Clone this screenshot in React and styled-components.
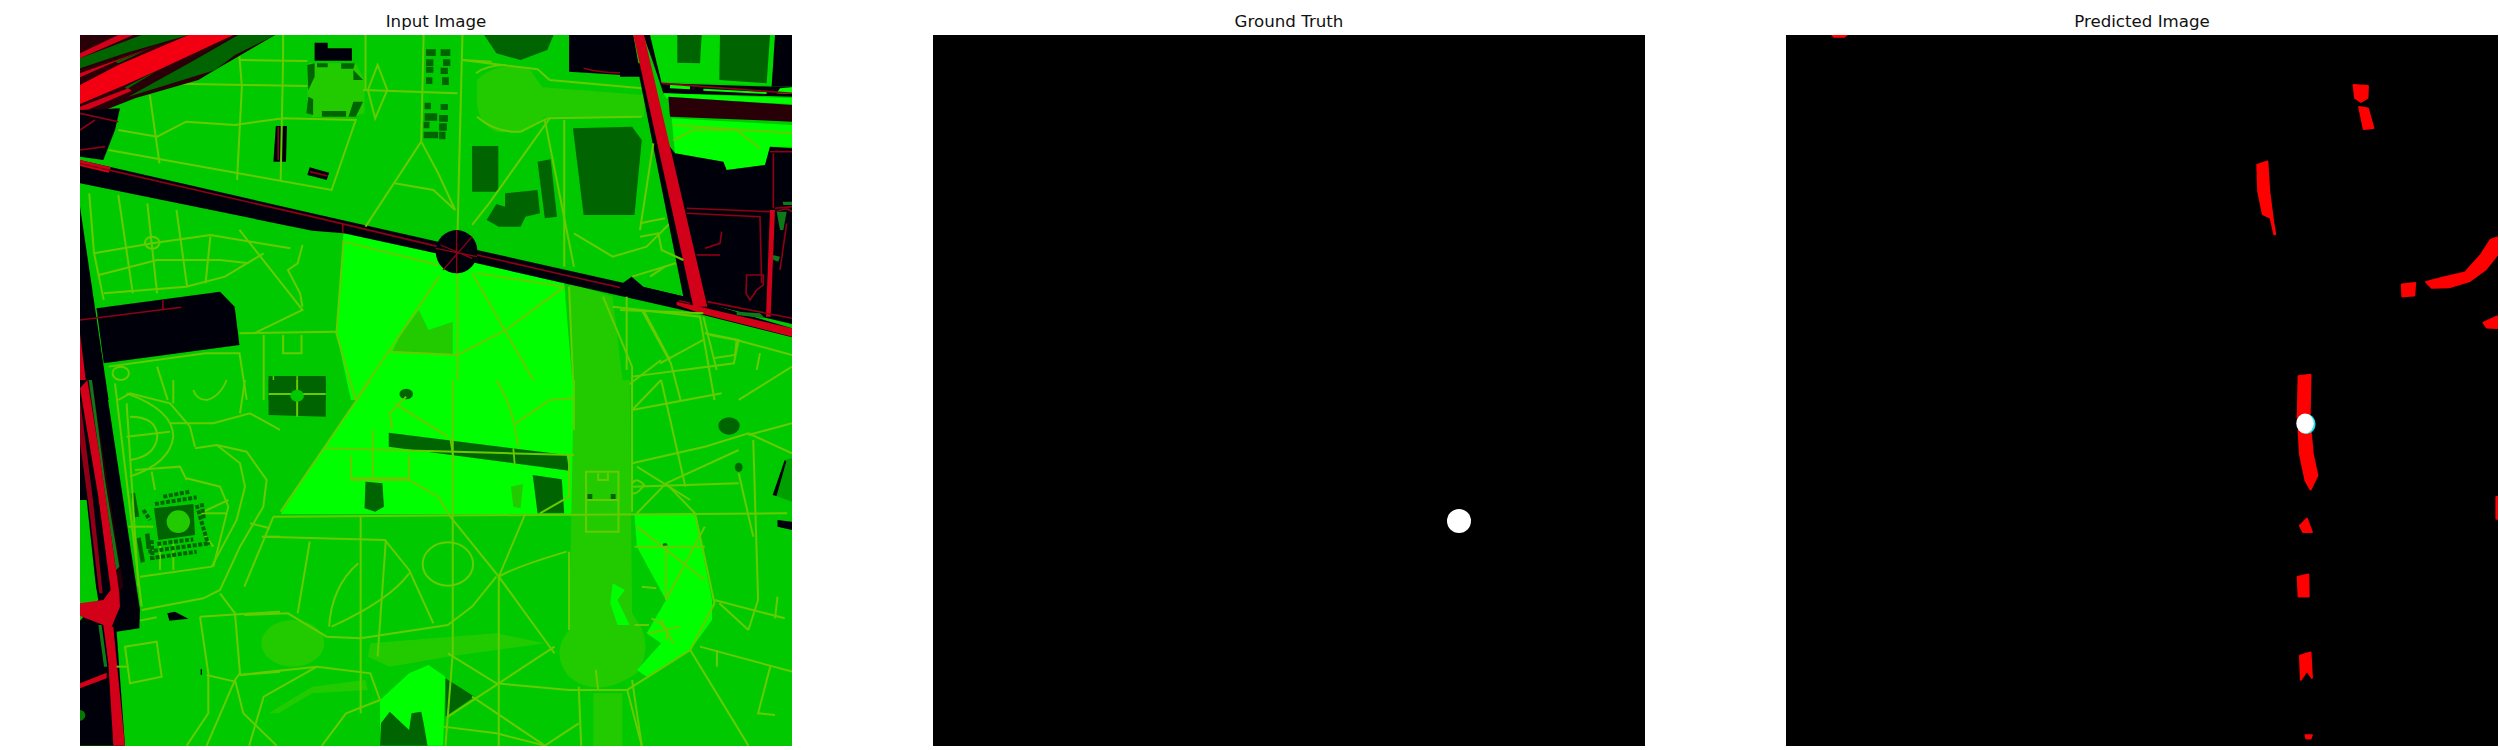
import React from 'react';
import styled, { createGlobalStyle } from 'styled-components';

const GlobalStyle = createGlobalStyle`
  html, body { margin: 0; background: #fff; }
`;

const Page = styled.div`
  display: flex;
  gap: 141px;
  width: 2500px;
  height: 750px;
  padding-left: 80px;
  box-sizing: border-box;
  overflow: hidden;
  background: #fff;
`;

const Panel = styled.section`
  display: flex;
  flex-direction: column;
  flex: none;
  width: 712px;
`;

const Title = styled.div`
  height: 35px;
  box-sizing: border-box;
  padding-top: 12px;
  font: 16.67px/20px "DejaVu Sans", sans-serif;
  color: #111;
  text-align: center;
`;

const Frame = styled.div`
  width: 712px;
  height: 711px;
  overflow: hidden;
  background: #000;
`;

const Picture = styled.svg`
  display: block;
  width: 712px;
  height: 711px;
  filter: blur(${(p) => p.$blur || 0}px);
  path { vector-effect: non-scaling-stroke; }
`;

const G = '#00c900';
const BRIGHT = '#00ff00';
const DARK = '#006400';
const MID = '#22cb00';
const KK = '#00000a';
const RED = '#d20018';
const HOT = '#f20012';
const DRED = '#8f0016';
const WINE = '#2a0008';
const LINE = '#66cc00';

// crop coordinates -> picture coordinates
const TOP = 'translate(-19.87 -35) scale(.4847 .3333)';
const BOTTOM = 'translate(-19.87 345) scale(.4847 .3333)';
const LEFT_CROP = 'translate(0 345) scale(.3333)';
const RIGHT_CROP = 'translate(540 -5) scale(.3333)';
const CORNER_CROP = 'translate(-5 -5) scale(.3333)';

const topFills = [
  [BRIGHT, 'M585 690L775 760L860 790L1040 850L1060 1200H600L570 1000Z'],
  [MID, 'M1050 850L1140 890L1165 1200H1060Z'],
  [MID, 'M860 240Q900 180 970 210L995 262L1205 285V350H1000Q960 405 900 395Q860 370 860 300Z'],
  [KK, 'M41 480L520 640L780 725L860 750L1290 890L1510 985V1012L1300 935L1040 850L860 790L775 760L585 700L520 692L41 550Z'],
  [RED, 'M41 480L105 502L100 518L41 498Z'],
  [KK, 'M1050 105H1180L1192 228L1050 215Z'],
  [DARK, 'M875 105H1018L1005 150L950 180L900 160Z'],
  [KK, 'M525 128H552V145H602V182H525Z'],
  [MID, 'M512 190H610L628 240V340L600 352H520L510 300Z'],
  [DARK, 'M510 195L525 190V230L512 270Z'],
  [DARK, 'M530 190H552V202H530ZM580 190H608L605 206H580ZM605 210L625 240H605ZM540 333H590V350H540ZM605 305L625 305L610 350H595ZM512 290L522 298L522 345L508 340Z'],
  [KK, 'M445 378H468L466 485H440Z'],
  [KK, 'M515 502L555 518L550 540L510 525Z'],
  [DARK, 'M850 438H904V575H850Z'],
  [DARK, 'M985 485L1012 478L1025 650L1000 655Z'],
  [DARK, 'M918 580L985 570L990 640L960 650L950 680L905 680L880 660L900 612L918 620Z'],
  [DARK, 'M1058 385L1180 380L1200 420L1185 645H1080Z'],
  [KK, 'M75 925L330 875L360 920L370 1035L90 1090Z'],
  [KK, 'M41 620L100 1200H41Z'],
  [RED, 'M41 1000L58 1200H41Z'],
  [DARK, 'M430 1128H548V1200H430Z'],
  [MID, 'M700 1010L740 930L760 990L810 965L810 1065L685 1055Z'],
  [DARK, 'M705 1185a9 14 0 1 0 18 0a9 14 0 1 0 -18 0'],
];

const blocks = [
  'M755 148H775V168H755ZM785 148H805V168H785ZM755 178H770V198H755ZM790 178H805V198H790ZM755 200H770V218H755ZM785 203H800V222H785ZM755 232H768V252H755ZM788 232H802V255H788Z',
  'M752 308H765V328H752ZM785 312H800V330H785ZM752 340H778V362H752ZM782 345H800V365H782ZM750 365H762V385H750ZM782 370H798V392H782ZM750 395H780V415H750ZM782 395H795V418H782Z',
];

const topLines = [
  'M460 105V180L455 540', 'M370 180L510 183', 'M830 180L890 185', 'M185 250L510 258', 'M625 270L820 280',
  'M630 105V270', 'M750 105L745 425', 'M830 105L820 690', 'M370 170L375 260L365 540', 'M185 285L205 490',
  'M100 450L560 570L610 360L460 355L360 375L260 365L200 410L120 390', 'M655 195L675 270L650 355L635 270Z',
  'M745 425L630 680', 'M745 425L780 520L815 630', 'M690 550L770 570L815 630',
  'M1010 355L885 610L850 675', 'M1005 355L1200 350', 'M1040 360V800', 'M1000 360L1060 800',
  'M830 180L985 208L1010 240L1200 265', 'M860 350Q900 400 950 395L1005 355', 'M858 220Q880 195 920 195',
  'M1060 700L1140 770L1210 740L1265 660', 'M1180 830L1270 790', 'M820 820V1200', 'M782 830L610 1200',
  'M850 820L1000 1200', 'M1040 860L920 990L820 1065L680 1055', 'M585 725L780 795', 'M585 720L570 1000L610 1200',
  'M1050 860L1060 1200', 'M860 820L1040 860', 'M60 580L70 760L90 900', 'M120 585L150 880', 'M180 610L200 880',
  'M240 630L262 860', 'M310 710L300 850', 'M370 690L500 930L400 1000', 'M70 760L190 730L310 705L475 745',
  'M80 825L200 780L330 780L390 790', 'M90 880L260 860L340 830L420 760', 'M500 735L490 790L470 810L495 880L500 920',
  'M370 1000L570 995', 'M420 1005V1200', 'M460 1005V1060H498V1005', 'M100 1100L300 1060L370 1060L385 1200',
  'M200 1100L222 1200', 'M1120 890L1180 1100V1200', 'M1140 920L1320 950L1350 1200', 'M1200 930L1260 1090L1280 1200',
  'M1330 1000L1400 1020L1390 1090L1180 1130', 'M1240 1080L1150 1180', 'M1510 1100L1400 1200',
  'M190 728m-15 0a15 18 0 1 0 30 0a15 18 0 1 0 -30 0', 'M125 1120m-17 0a17 20 0 1 0 34 0a17 20 0 1 0 -34 0',
];

const topReds = [
  'M41 490L520 650L780 740', 'M860 765L1040 825L1300 910', 'M41 960L250 922', 'M212 900V930',
  'M1080 205Q1130 225 1190 215', 'M450 380V480', 'M515 515L552 528', 'M583 672V700',
];

const bottomFills = [
  [BRIGHT, 'M640 0H1060V402H455L545 200Z'],
  [MID, 'M1060 0H1175L1180 700Q1230 790 1190 880Q1110 960 1050 890Q1010 820 1050 750Z'],
  [MID, 'M1100 940H1160V1097H1100Z'],
  [BRIGHT, 'M1185 405L1310 400L1345 660V720L1300 810L1210 890L1190 870L1240 790L1210 760L1250 660L1190 500Z'],
  [MID, 'M415 790a65 70 0 1 0 130 0a65 70 0 1 0 -130 0'],
  [MID, 'M640 790L900 760L1000 790L800 830L680 860L635 830Z'],
  [MID, 'M430 1000L520 920L630 900L635 930L520 940L450 1000Z'],
  [DARK, 'M678 158L1045 225L1050 272L678 200Z'],
  [DARK, 'M975 285L1035 298L1040 400H985Z'],
  [DARK, 'M630 305L665 310L668 380L650 395L628 385Z'],
  [MID, 'M930 320L955 312L950 385L935 380Z'],
  [DARK, 'M700 42a14 16 0 1 0 28 0a14 16 0 1 0 -28 0'],
  [DARK, 'M1358 138a22 26 0 1 0 44 0a22 26 0 1 0 -44 0'],
  [DARK, 'M1392 262a8 14 0 1 0 16 0a8 14 0 1 0 -16 0'],
  [DARK, 'M1243 497a5 8 0 1 0 10 0a5 8 0 1 0 -10 0'],
  ['#00a000', 'M1495 240L1510 235V365L1472 345Z'],
  [KK, 'M1470 345L1495 240L1498 245L1478 348Z'],
  [KK, 'M1480 420L1510 425V450L1480 440Z'],
  [DARK, 'M430 0H548V110L430 105Z'],
  [DARK, 'M1088 342H1098V362H1088ZM1136 342H1146V362H1136Z'],
  [BRIGHT, 'M660 960L720 880L760 855L795 890L790 1097H660Z'],
  [DARK, 'M795 895L855 950L795 1010Z'],
  [DARK, 'M660 1097L662 1030L680 995L720 1050L725 1000L745 995L750 1030L758 1097Z'],
  [BRIGHT, 'M1140 610L1165 630L1150 660L1175 735L1150 735L1135 670Z'],
];

const bottomLines = [
  'M640 0L455 395', 'M545 205L1060 225', 'M440 410L1500 400', 'M645 150V300', 'M600 225V295H720V225',
  'M600 300H720L780 350L805 410L905 590L1000 780L1020 820', 'M810 0V820L795 1097', 'M960 400L905 590V1097',
  'M990 400L1050 350V225', 'M1060 0V150', 'M940 130L1010 60L1060 55', 'M690 70L800 170', 'M714 50L680 100L685 150',
  'M900 0Q935 80 945 200', 'M420 470L670 480L720 570L770 730', 'M620 405L620 1000', 'M515 485L490 700',
  'M672 480L655 830', 'M440 410L380 620', 'M615 550Q560 620 555 740', 'M720 580Q680 660 560 740',
  'M800 552m-52 0a52 65 0 1 0 104 0a52 65 0 1 0 -104 0', 'M905 590Q940 560 1045 515',
  'M900 590L850 680L800 735L620 775L550 770L470 700L380 705', 'M1050 515V750',
  'M800 820L900 910L1050 930L1170 930L1300 810L1350 670L1310 400',
  'M1020 800L905 910L800 1010', 'M370 885L530 860L640 880L660 960',
  'M530 860L420 950L390 1097', 'M1180 0V395', 'M1240 0L1180 90', 'M1365 40L1180 90', 'M1180 250L1330 200L1420 160L1510 220',
  'M1250 310L1190 400', 'M1250 310L1310 400', 'M1190 260L1300 360', 'M1250 310L1400 210', 'M1180 320L1400 310', 'M1240 0L1290 320',
  'M1190 440L1330 600', 'M1330 440L1250 660', 'M1250 497V660', 'M1185 500H1330', 'M1430 180L1440 660L1420 750', 'M1350 660L1495 715',
  'M1320 800L1510 875', 'M1300 810L1420 1097', 'M1465 860L1440 1000L1475 1005', 'M1400 280L1430 470', 'M1510 130L1420 165',
  'M1085 275H1152V455H1085Z', 'M1085 360H1152', 'M1110 280V300H1130V280', 'M1200 1097L1170 930', 'M1070 920L1075 1097',
  'M1105 870L1110 930', 'M1355 810V860', 'M790 1040L900 1060L1000 1097', 'M850 950L1000 1097', 'M1070 1030L1000 1097',
  'M660 960L590 1000L540 1097', 'M1180 310Q1190 290 1205 315Q1190 345 1180 340',
  'M1475 715L1480 650', 'M1420 750L1360 670', 'M1220 715Q1260 740 1250 780M1215 760L1280 740M1240 720L1265 790', 'M1185 735H1215', 'M1200 620L1230 625',
  'M1180 900L1200 1097',
];

const leftFills = [
  [KK, 'M0 0H75L180 690L178 745L110 755L135 1097H0V722L55 660L0 360Z'],
  [G, 'M0 360H20L52 660L0 665Z'],
  [WINE, 'M22 0H36L130 620L110 640Z'],
  ['#0d7a1a', 'M26 0H36L75 300L118 560L108 570Z'],
  [DRED, 'M0 60L12 150L40 370L68 640L58 640L25 370L0 190Z'],
  [RED, 'M0 25L22 0L60 230L118 640L120 680L95 740L100 740L135 1097H100L85 850L70 735L0 708V670L70 660L92 630L55 350Z'],
  [RED, 'M0 910L80 878L80 895L0 925Z'],
  ['#0d7a1a', 'M55 735H65L82 860L72 860Z'],
  ['#007a00', 'M0 990a16 16 0 0 1 0 32Z'],
  [KK, 'M262 700L285 695L325 716L268 722Z'],
  [KK, 'M362 868h4v16h-4Z'],
  [DARK, 'M222 385L340 372L345 465L235 480Z'],
  [MID, 'M260 425a35 34 0 1 0 70 0a35 34 0 1 0 -70 0'],
  [DARK, 'M152 340L165 338L178 410L165 412ZM170 475L182 472L195 545L182 548Z'],
  [DARK, 'M195 462L208 460L214 505L200 508Z'],
];

const leftLines = [
  'M105 10L185 680', 'M140 70L175 620', 'M115 60L150 40L270 70L330 140L345 200', 'M150 110Q230 110 232 170Q225 230 150 240',
  'M140 170L270 155', 'M140 40Q280 90 280 170Q270 250 150 290', 'M270 130H400L510 100L600 150',
  'M345 205L410 195L480 250L495 320L470 420L395 560L180 590', 'M410 195L500 215L560 300L550 380L480 500L420 630L370 655L185 690',
  'M165 270L300 260L320 300', 'M215 275L225 330', 'M320 295L420 320L445 380L400 560', 'M420 640L465 700L480 880L465 900L380 1097',
  'M180 722L230 712', 'M360 710L600 695', 'M360 710L385 880L385 1000L320 1097', 'M135 800L230 785L245 890L150 910Z',
  'M480 885L600 875', 'M380 885L465 905', 'M465 900L490 1000L590 1097', 'M145 440L220 440', 'M240 490V570', 'M280 490V570',
  'M360 400L445 360', 'M350 400H440', 'M370 460L400 500', 'M340 30Q350 60 380 60Q420 50 440 0', 'M280 0V70', 'M495 0L480 100',
  'M110 860H140', 'M510 430L570 445', 'M545 470H600',
];

const leftBlocks = [
  'M225 372L350 352', 'M250 350L330 335', 'M350 375L385 495', 'M365 370L372 420', 'M205 515L385 490', 'M210 535L350 515',
  'M190 390L210 420', 'M232 492L340 478', 'M215 480L218 540',
];

const rightFills = [
  [KK, 'M0 15H40L62 140H0Z'],
  ['#00d800', 'M90 15H465L455 165L120 155Z'],
  [DARK, 'M172 15H245L240 100L172 98Z'],
  [DARK, 'M300 15H450L440 160L298 150Z'],
  [KK, 'M465 15H516V170L455 170Z'],
  [KK, 'M70 15H90L125 160L516 172V200L130 190L100 100Z'],
  [BRIGHT, 'M150 165H210V178L150 175ZM250 176L440 186V192L250 182ZM480 175L516 172V192L470 190Z'],
  [BRIGHT, 'M130 190L516 205V222L140 205Z'],
  [WINE, 'M145 200L516 225V275L150 260Z'],
  [BRIGHT, 'M155 265L516 285V350L450 350L435 405L320 420L310 395L165 370Z'],
  [KK, 'M165 370L310 395L320 420L435 405L450 350L516 355V882L260 822L215 820L150 560L95 280Z'],
  [KK, 'M50 100L75 100L215 810L190 800Z'],
  [RED, 'M40 15H72L262 830L220 830Z'],
  [RED, 'M170 815L240 830L516 895V920L240 850L170 825Z'],
  [KK, 'M0 765L35 740L70 770L195 800L170 815L0 785Z'],
  ['#0d7a1a', 'M350 845L420 850L435 865L350 855Z'],
  ['#0d7a1a', 'M488 515H516V525H490Z'],
  ['#0d7a1a', 'M470 545L500 545L490 600L480 600Z'],
  ['#0d7a1a', 'M458 675L480 680L475 695L460 690Z'],
  [RED, 'M450 540L465 540L452 860L438 860Z'],
];

const rightLines = [
  'M160 285L516 310', 'M160 330L220 300L350 300L420 355', 'M100 340L60 600', 'M60 580L135 565', 'M60 620L115 610L125 660L190 690',
  'M90 740L135 710', 'M0 840L250 850', 'M70 840L150 990', 'M250 860L290 1020', 'M270 915L350 930L345 975L280 985', 'M120 1000L250 930',
  'M350 930L516 975', 'M420 970L410 1020', 'M20 800V1020',
];

const rightReds = [
  'M200 535L450 545', 'M200 550L420 560L425 760', 'M460 370V535', 'M465 535L516 530', 'M450 365H516',
  'M380 735H430V765L410 780L390 810L378 790Z', 'M230 675H300', 'M255 655L300 640L305 605', 'M470 545Q500 530 516 545', 'M500 580L480 720',
  'M125 160L516 190', 'M262 815L516 865',
];

const cornerFills = [
  [WINE, 'M15 15H600L420 120L370 150L180 205L15 270Z'],
  [DARK, 'M15 85L200 15H340L150 70L15 115Z'],
  [RED, 'M15 70L130 15H175L15 85Z'],
  [HOT, 'M15 165L130 105L340 15H475L250 120L150 165L15 222Z'],
  [RED, 'M15 130L250 45L120 95L15 142Z'],
  [DARK, 'M160 200L350 95L490 15H600L480 75L420 120Z'],
  [DARK, 'M120 95L210 62L130 100Z'],
  [DARK, 'M150 172L250 120L155 178Z'],
  [RED, 'M15 230L160 175L170 182L15 250Z'],
  [KK, 'M15 240L135 235L120 300L85 390L15 380Z'],
];

const cornerReds = ['M15 250L130 275', 'M15 360L90 350', 'M15 300L60 270'];

const predicted = [
  'M115 72H148L142 77H120Z',
  'M1252 178L1283 180L1282 205L1268 213L1255 205Z',
  'M1264 224L1283 227L1295 268L1274 270Z',
  'M1042 345L1064 338L1068 400L1076 460L1081 490H1079L1071 456L1054 448L1044 400Z',
  'M1410 590L1450 580L1495 570L1530 532L1550 502L1565 497V533L1540 563L1505 588L1460 601L1422 602Z',
  'M1357 595L1386 592L1384 618L1358 620Z',
  'M1535 675L1565 662V686L1542 685Z',
  'M1132 787L1158 784L1156 875H1130Z',
  'M1132 900L1158 900L1163 950L1173 995L1158 1024L1147 1005L1135 950Z',
  'M1135 1100L1150 1085L1161 1113L1142 1113Z',
  'M1130 1207L1153 1202L1154 1248H1132Z',
  'M1135 1372L1158 1365L1161 1418L1150 1403L1137 1422Z',
  'M1147 1538H1161L1158 1545H1149Z',
  'M1563 1040H1566V1085H1563Z',
];

function Layer({ fills = [], lines = [], reds = [], transform }) {
  return (
    <g transform={transform}>
      {fills.map(([color, d], i) => <path key={i} d={d} fill={color} />)}
      {lines.map((d, i) => <path key={i} d={d} fill="none" stroke={LINE} strokeWidth="2" />)}
      {reds.map((d, i) => <path key={i} d={d} fill="none" stroke={DRED} strokeWidth="1.6" />)}
    </g>
  );
}

function InputMap() {
  return (
    <Picture viewBox="0 0 712 711" $blur={0.45}>
      <rect width="712" height="711" fill={G} />
      <Layer fills={topFills} lines={topLines} reds={topReds} transform={TOP} />
      <g transform={TOP}>
        <path d="M775 755a43 65 0 1 0 86 0a43 65 0 1 0 -86 0" fill={KK} />
        <path d="M818 690V820M785 735L850 775M850 710L790 810M775 745L860 770" fill="none" stroke={DRED} strokeWidth="1.3" />
        {blocks.map((d, i) => <path key={i} d={d} fill={DARK} />)}
        <path d="M430 1165H548M489 1128V1200M440 1128V1200" fill="none" stroke={LINE} strokeWidth="1.5" />
      </g>
      <Layer fills={bottomFills} lines={bottomLines} transform={BOTTOM} />
      <g transform={BOTTOM}>
        <path d="M430 42H548M489 0V110" fill="none" stroke={LINE} strokeWidth="2" />
        <path d="M475 47a14 18 0 1 0 28 0a14 18 0 1 0 -28 0" fill={G} />
        <path d="M805 175L812 240M935 205L938 255" fill="none" stroke={LINE} strokeWidth="1.8" />
      </g>
      <Layer fills={leftFills} lines={leftLines} transform={LEFT_CROP} />
      <g transform={LEFT_CROP}>
        {leftBlocks.map((d, i) => (
          <path key={i} d={d} fill="none" stroke={DARK} strokeWidth="4" strokeDasharray="4 1.6" />
        ))}
      </g>
      <Layer fills={rightFills} lines={rightLines} reds={rightReds} transform={RIGHT_CROP} />
      <Layer fills={cornerFills} reds={cornerReds} transform={CORNER_CROP} />
    </Picture>
  );
}

function TruthMask() {
  return (
    <Picture viewBox="0 0 712 711">
      <circle cx="526" cy="486" r="12" fill="#fff" />
    </Picture>
  );
}

function PredictedMask() {
  return (
    <Picture viewBox="0 0 712 711" $blur={0.3}>
      <g transform="translate(-7 -35) scale(.459 .478)">
        {predicted.map((d, i) => (
          <path key={i} d={d} fill="#fe0000" stroke="#fe0000" strokeWidth="2" strokeLinejoin="round" />
        ))}
        <ellipse cx="1150" cy="887" rx="19" ry="21" fill="#19e6e6" />
        <ellipse cx="1146" cy="886" rx="19" ry="21" fill="#fff" />
      </g>
    </Picture>
  );
}

export default function App() {
  return (
    <>
      <GlobalStyle />
      <Page>
        <Panel>
          <Title>Input Image</Title>
          <Frame><InputMap /></Frame>
        </Panel>
        <Panel>
          <Title>Ground Truth</Title>
          <Frame><TruthMask /></Frame>
        </Panel>
        <Panel>
          <Title>Predicted Image</Title>
          <Frame><PredictedMask /></Frame>
        </Panel>
      </Page>
    </>
  );
}
